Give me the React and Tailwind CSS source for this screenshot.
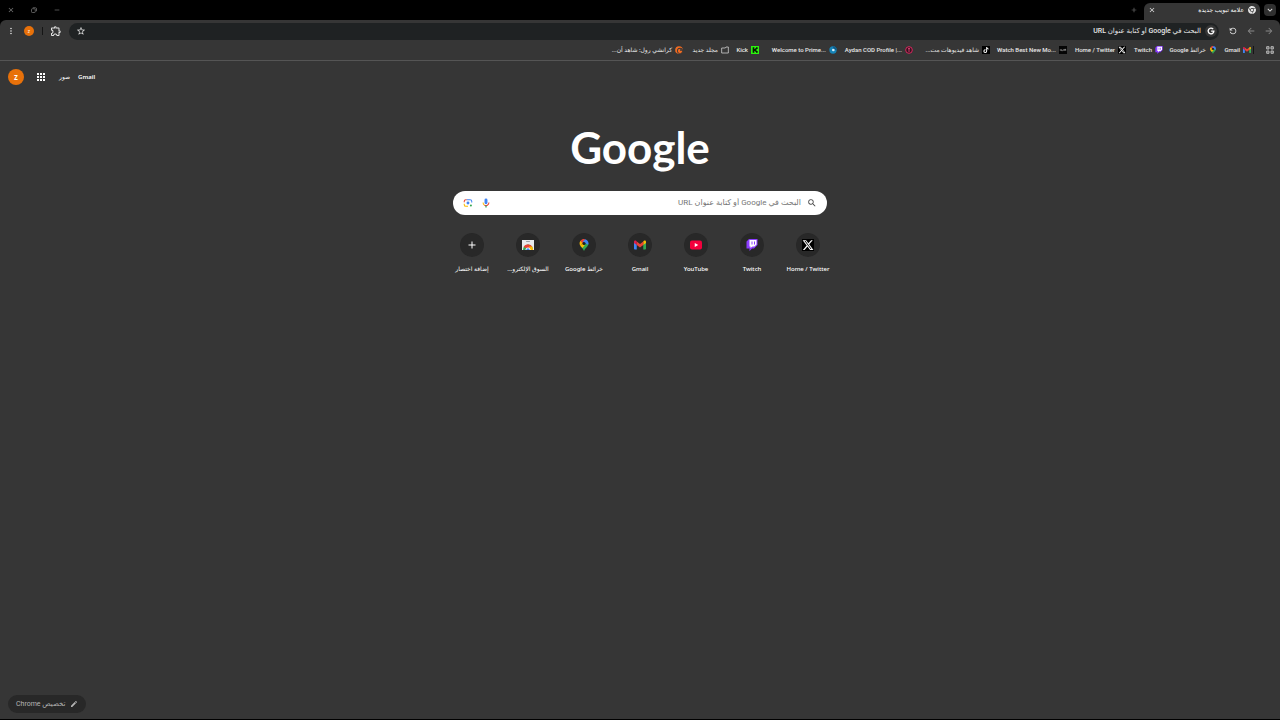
import React from 'react';
import { FaXTwitter, FaTiktok, FaYoutube, FaChrome } from 'react-icons/fa6';
import {
  MdSearch,
  MdOutlineExtension,
  MdStarBorder,
  MdApps,
  MdRefresh,
  MdArrowBack,
  MdArrowForward,
  MdMoreVert,
  MdAdd,
  MdClose,
  MdEdit,
  MdKeyboardArrowDown,
  MdRemove,
} from 'react-icons/md';

const GmailIcon = ({ className }) => (
  <svg viewBox="0 0 24 18" className={className}>
    <path d="M0 2v14.400C0 17.300.7 18 1.600 18H5.500V8.500z" fill="#4285f4" />
    <path d="M24 2v14.400c0 .9-.7 1.600-1.600 1.600H18.500V8.500z" fill="#34a853" />
    <path d="M18.500 1.800V9L24 4.800V2.500C24 .3 21.500-.8 19.800.6z" fill="#fbbc04" />
    <path d="M5.500 9V1.800l6.500 5 6.500-5V9L12 14z" fill="#ea4335" />
    <path d="M0 2.500v2.300L5.500 9V1.800L4.200.6C2.500-.8 0 .3 0 2.500z" fill="#e01e4f" />
  </svg>
);

const MapsIcon = ({ className }) => (
  <svg viewBox="0 0 18 24" className={className}>
    <path d="M1.500 13.500C3.500 17 7 18 9 24c2-6 5.500-7 7.500-10.500L18 9 9 8z" fill="#34a853" />
    <path d="M2 3.500 7 7l-5.400 6.700C-.4 10.500-.5 6.500 2 3.500z" fill="#fbbc04" />
    <path d="M2 3.500C4 1 7.500-.5 11 .3L6 9z" fill="#ea4335" />
    <path d="M11 .3c5 1.200 8 6 6.700 11L12 9 6.500 6z" fill="#4285f4" />
    <path d="m1.600 13.700 5-6.200 4.400 4-5 6.300c-1.700-1.300-3.300-2.300-4.400-4.100z" fill="#fbbc04" />
    <circle cx="9" cy="9" r="3.200" fill="#202020" />
  </svg>
);

const StoreIcon = ({ className }) => (
  <svg viewBox="0 0 24 22" className={className}>
    <path d="M0 1h24v20H0z" fill="#e8eaed" />
    <rect x="8" y="3" width="8" height="2" rx="1" fill="#9aa0a6" />
    <path d="M2 21a10 11 0 0 1 20 0z" fill="#34a853" />
    <path d="M3 15a10 10 0 0 1 18 0l-5 2H8z" fill="#ea4335" />
    <path d="M22 21a10 10 0 0 0-2-7h-6l2 7z" fill="#fbbc04" />
    <path d="M7 21a5 5 0 0 1 10 0z" fill="#fff" />
    <path d="M8.500 21a3.500 3.500 0 0 1 7 0z" fill="#4285f4" />
  </svg>
);

const XIcon = ({ className }) => (
  <span className={`flex items-center justify-center bg-black text-white ${className}`}>
    <FaXTwitter className="size-full" />
  </span>
);

const TikTokIcon = ({ className }) => (
  <span className={`flex items-center justify-center bg-black p-px text-white ${className}`}>
    <FaTiktok className="size-full" />
  </span>
);

const TwitchIcon = ({ className }) => (
  <svg viewBox="0 0 24 24" className={className}>
    <path d="M6 0 1 5v14h6v5l5-5h4l7-7V0z" fill="#8b3dff" />
    <path d="M7 2h14v9l-4 4h-4l-4 3v-3H7z" fill="#fff" />
    <path d="M11 5h2v6h-2zM16 5h2v6h-2z" fill="#8b3dff" />
  </svg>
);

const YouTubeIcon = ({ className }) => (
  <svg viewBox="0 0 24 24" className={className}>
    <rect x="0" y="3" width="24" height="18" rx="4" fill="#f4003d" />
    <path d="m9.500 8 7 4-7 4z" fill="#fff" />
  </svg>
);

const WatchIcon = ({ className }) => (
  <svg viewBox="0 0 24 24" className={className}>
    <path d="M0 0h24v24H0z" fill="#050505" />
    <path d="M4 10v4M8 10v4h3M14 10v4M17 14v-4h3v4" stroke="#ccc" strokeWidth="2" fill="none" />
  </svg>
);

const CodIcon = ({ className }) => (
  <svg viewBox="0 0 24 24" className={className}>
    <circle cx="12" cy="12" r="10" fill="#3a1020" stroke="#d42a5e" strokeWidth="3" />
    <path d="M12 6v12M9 8h6" stroke="#e24a78" strokeWidth="2.500" />
  </svg>
);

const PrimeIcon = ({ className }) => (
  <svg viewBox="0 0 24 24" className={className}>
    <circle cx="12" cy="12" r="11" fill="#1684b8" />
    <path d="M12 1a11 11 0 0 1 11 11H12z" fill="#0f5e8c" />
    <circle cx="13" cy="12" r="4" fill="#d8f1fb" />
  </svg>
);

const KickIcon = ({ className }) => (
  <svg viewBox="0 0 24 24" className={className}>
    <path d="M0 0h24v24H0z" fill="#2bf40d" />
    <path d="M5 4h5v5h3V6h2V4h5v5h-3v2h-2v2h2v2h3v5h-5v-2h-2v-3h-3v5H5z" fill="#071505" />
  </svg>
);

const FolderIcon = ({ className }) => (
  <svg viewBox="0 0 24 22" className={className}>
    <path d="M2 5h11l2-3h7v18H2z" fill="none" stroke="#c9c9c9" strokeWidth="2.500" strokeLinejoin="round" />
  </svg>
);

const CrunchyIcon = ({ className }) => (
  <svg viewBox="0 0 24 24" className={className}>
    <circle cx="12" cy="12" r="11.500" fill="#f26b21" />
    <circle cx="15" cy="14" r="9" fill="#363636" />
    <circle cx="15" cy="15" r="6.500" fill="#f26b21" />
    <circle cx="18" cy="12" r="3" fill="#363636" />
  </svg>
);

const GoogleG = ({ className }) => (
  <svg viewBox="0 0 24 24" className={className}>
    <path d="M18.500 6.500A8.500 8.500 0 1 0 20.500 12.500H12.500" fill="none" stroke="#fff" strokeWidth="4" />
  </svg>
);

const MicIcon = ({ className }) => (
  <svg viewBox="0 0 24 24" className={className}>
    <rect x="8.500" y="1" width="7" height="14" rx="3.500" fill="#4285f4" />
    <path d="M5 11a7 7 0 0 0 3 6" fill="none" stroke="#fbbc04" strokeWidth="2.500" />
    <path d="M8 17a7 7 0 0 0 11-6" fill="none" stroke="#ea4335" strokeWidth="2.500" />
    <path d="M12 18v5" stroke="#34a853" strokeWidth="3" />
  </svg>
);

const LensIcon = ({ className }) => (
  <svg viewBox="0 0 24 24" className={className} fill="none" strokeWidth="2.500">
    <path d="M3 10V8a4 4 0 0 1 4-4h2" stroke="#ea4335" />
    <path d="M9 4h8a4 4 0 0 1 4 4v3" stroke="#4285f4" />
    <path d="M3 14v2a4 4 0 0 0 4 4h5" stroke="#fbbc04" />
    <circle cx="12" cy="12" r="3.500" fill="#4285f4" />
    <circle cx="19" cy="18" r="2.500" fill="#34a853" />
  </svg>
);

const RestoreIcon = ({ className }) => (
  <svg viewBox="0 0 24 24" className={className} fill="none" stroke="currentColor" strokeWidth="3">
    <rect x="2" y="7" width="15" height="15" rx="3" />
    <path d="M7 3h11a4 4 0 0 1 4 4v10" />
  </svg>
);

const bookmarks = [
  { title: 'Gmail', Icon: GmailIcon, width: 'w-[34px]' },
  { title: 'خرائط Google', Icon: MapsIcon, width: 'w-[54px]' },
  { title: 'Twitch', Icon: TwitchIcon, width: 'w-[37px]' },
  { title: 'Home / Twitter', Icon: XIcon, width: 'w-[59px]' },
  { title: 'Watch Best New Mo...', Icon: WatchIcon, width: 'w-[77px]', ltr: true },
  { title: 'شاهد فيديوهات مت...', Icon: TikTokIcon, width: 'w-[77px]' },
  { title: 'Aydan COD Profile |...', Icon: CodIcon, width: 'w-[76px]', ltr: true },
  { title: 'Welcome to Prime...', Icon: PrimeIcon, width: 'w-[78px]', ltr: true },
  { title: 'Kick', Icon: KickIcon, width: 'w-[30px]' },
  { title: 'مجلد جديد', Icon: FolderIcon, width: 'w-[46px]' },
  { title: 'كرانشي رول: شاهد أن...', Icon: CrunchyIcon, width: 'w-[70px]' },
];

const shortcuts = [
  { title: 'Home / Twitter', Icon: XIcon },
  { title: 'Twitch', Icon: TwitchIcon },
  { title: 'YouTube', Icon: YouTubeIcon },
  { title: 'Gmail', Icon: GmailIcon },
  { title: 'خرائط Google', Icon: MapsIcon },
  { title: 'السوق الإلكترو...', Icon: StoreIcon },
];

const TabStrip = () => (
  <header className="flex h-5 items-end bg-black pr-1 pl-[7px] text-[#e3e3e3]">
    <button aria-label="البحث في علامات التبويب" className="mb-1 flex size-3 items-center justify-center rounded bg-[#303030]">
      <MdKeyboardArrowDown className="size-2.5" />
    </button>
    <div className="mr-1 flex h-[17px] w-[116px] items-center rounded-t-md bg-[#363636] px-1 pb-1">
      <FaChrome className="size-2" />
      <span className="mr-1 flex-1 text-[6px] leading-3 font-medium whitespace-nowrap text-white">علامة تبويب جديدة</span>
      <button aria-label="إغلاق" className="flex size-2 items-center justify-center">
        <MdClose className="size-2" />
      </button>
    </div>
    <button aria-label="علامة تبويب جديدة" className="mr-1.5 mb-1.5 text-[#777]">
      <MdAdd className="size-2" />
    </button>
    <div className="mr-auto mb-1.5 flex items-center gap-4 text-[#777]">
      <button aria-label="تصغير">
        <MdRemove className="size-2" />
      </button>
      <button aria-label="استعادة">
        <RestoreIcon className="size-1.5" />
      </button>
      <button aria-label="إغلاق النافذة">
        <MdClose className="size-2" />
      </button>
    </div>
  </header>
);

const Toolbar = () => (
  <div className="flex h-[22px] items-center rounded-t-md bg-[#363636] px-1.5 text-[#e3e3e3]">
    <div className="flex w-[55px] items-center gap-2">
      <button aria-label="رجوع" className="text-[#888]">
        <MdArrowForward className="size-2.5" />
      </button>
      <button aria-label="للأمام" className="text-[#888]">
        <MdArrowBack className="size-2.5" />
      </button>
      <button aria-label="إعادة تحميل">
        <MdRefresh className="size-2.5 -scale-x-100" />
      </button>
    </div>
    <div className="flex h-[17px] flex-1 items-center rounded-full bg-[#1f2223] pr-0.5 pl-[7px]">
      <span className="flex size-3 items-center justify-center rounded-full bg-[#363636]">
        <GoogleG className="size-2" />
      </span>
      <input
        aria-label="شريط العناوين"
        placeholder="البحث في Google أو كتابة عنوان URL"
        className="mr-1 min-w-0 flex-1 bg-transparent font-['Roboto','DejaVu_Sans',sans-serif] text-[7px] leading-4 font-medium outline-none placeholder:text-[#e8e8e8] placeholder:opacity-100"
      />
      <button aria-label="إضافة إشارة">
        <MdStarBorder className="size-2.5" />
      </button>
    </div>
    <button aria-label="الإضافات" className="mr-[7px]">
      <MdOutlineExtension className="size-3" />
    </button>
    <span className="mr-[7px] h-2 w-px bg-[#151515]" />
    <button className="mr-2 flex size-2.5 items-center justify-center rounded-full bg-[#e8710a] text-[5px] leading-none text-white">z</button>
    <button aria-label="القائمة" className="mr-2">
      <MdMoreVert className="size-2.5" />
    </button>
  </div>
);

const BookmarksBar = () => (
  <nav className="flex h-[19px] items-center border-b border-[#555] bg-[#363636] pr-1.5 pb-0.5 font-['Roboto','DejaVu_Sans',sans-serif] text-[#e8e8e8]">
    <button aria-label="التطبيقات">
      <svg viewBox="0 0 24 24" className="size-2" fill="#666" stroke="#b5b5b5" strokeWidth="3">
        <path d="M2 2h7v7H2zM15 2h7v7h-7zM2 15h7v7H2zM15 15h7v7h-7z" />
      </svg>
    </button>
    <span className="mr-3 ml-0.5 h-2 w-px bg-[#151515]" />
    {bookmarks.map(({ title, Icon, width, ltr }) => (
      <a key={title} href="#" className={`flex shrink-0 items-center gap-[3px] ${width}`}>
        <Icon className="size-2 shrink-0" />
        <span dir={ltr ? 'ltr' : 'rtl'} className="text-[6px] leading-3 font-medium whitespace-nowrap">{title}</span>
      </a>
    ))}
  </nav>
);

const App = () => {
  return (
    <div
      dir="rtl"
      className="flex min-h-screen flex-col border-b border-black bg-black font-['Noto_Sans','DejaVu_Sans',sans-serif]"
    >
      <TabStrip />
      <Toolbar />
      <BookmarksBar />
      <main className="flex flex-1 flex-col bg-[#363636] px-2 pt-2 pb-1.5 text-white">
        <div dir="ltr" className="flex h-4 items-center">
          <button className="flex size-4 items-center justify-center rounded-full bg-[#e8710a] text-[8px] leading-none font-semibold">z</button>
          <button aria-label="تطبيقات Google" className="ml-[11px]">
            <MdApps className="size-3" />
          </button>
          <a href="#" className="ml-3 text-[6px] leading-3 font-medium">صور</a>
          <a href="#" className="ml-2 text-[6px] leading-3 font-semibold">Gmail</a>
        </div>

        <h1 className="mt-8 text-center font-['Lato',sans-serif] text-[44px] leading-[60px] font-bold">Google</h1>

        <form className="mx-auto mt-3.5 flex h-6 w-full max-w-[374px] items-center rounded-full bg-white px-2.5">
          <MdSearch className="size-2.5 text-[#444]" />
          <input
            aria-label="بحث"
            placeholder="البحث في Google أو كتابة عنوان URL"
            className="mr-1.5 min-w-0 flex-1 bg-transparent font-['Roboto','DejaVu_Sans',sans-serif] text-[8px] leading-4 text-gray-800 outline-none placeholder:text-[#757575] placeholder:opacity-100"
          />
          <button type="button" aria-label="البحث الصوتي">
            <MicIcon className="size-2.5" />
          </button>
          <button type="button" aria-label="البحث بالصور" className="mr-2">
            <LensIcon className="size-2.5" />
          </button>
        </form>

        <div className="mx-auto mt-[18px] grid grid-cols-7">
          {shortcuts.map(({ title, Icon }) => (
            <a key={title} href="#" className="flex w-14 flex-col items-center">
              <span className="flex size-6 items-center justify-center rounded-full bg-[#282828]">
                <Icon className="size-3" />
              </span>
              <span className="mt-1.5 text-[6px] leading-3 font-medium whitespace-nowrap">{title}</span>
            </a>
          ))}
          <button className="flex w-14 flex-col items-center">
            <span className="flex size-6 items-center justify-center rounded-full bg-[#282828]">
              <MdAdd className="size-3" />
            </span>
            <span className="mt-1.5 text-[6px] leading-3 font-medium whitespace-nowrap">إضافة اختصار</span>
          </button>
        </div>

        <button className="mt-auto mr-auto flex h-[18px] items-center gap-1 rounded-full bg-[#282828] px-2 font-['Roboto','DejaVu_Sans',sans-serif] text-[#b5b5b5]">
          <MdEdit className="size-2" />
          <span className="text-[7px] leading-3 whitespace-nowrap">تخصيص Chrome</span>
        </button>
      </main>
    </div>
  );
};

export default App;
